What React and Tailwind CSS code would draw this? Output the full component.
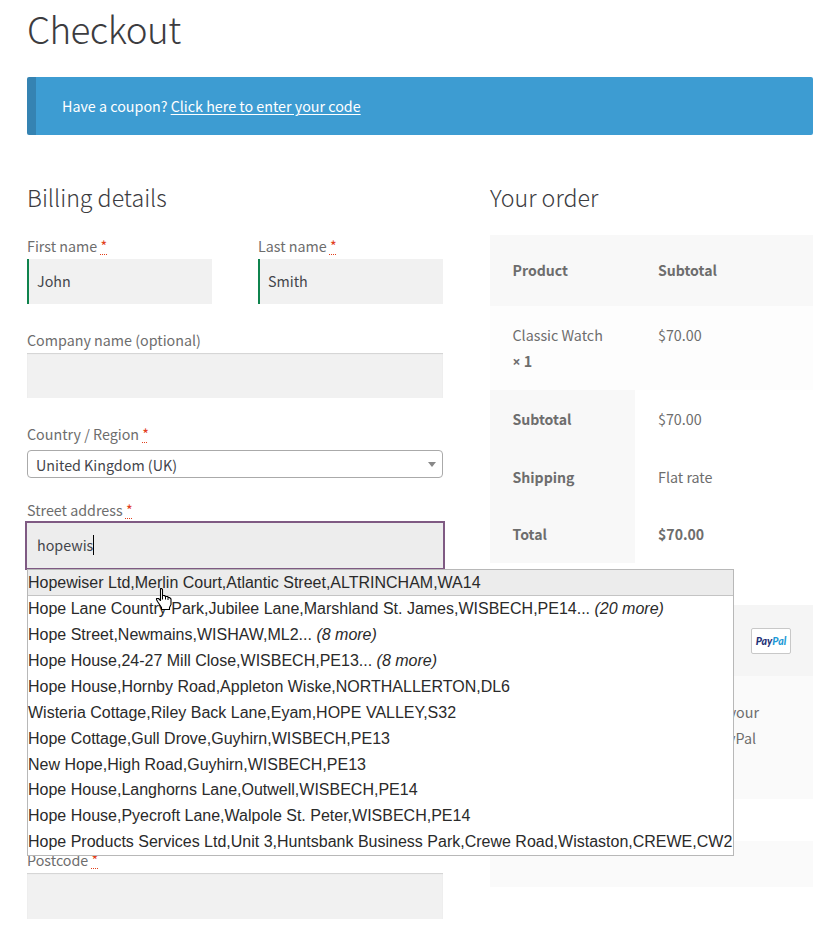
import React from "react";

const suggestions = [
  ["Hopewiser Ltd,Merlin Court,Atlantic Street,ALTRINCHAM,WA14"],
  ["Hope Lane Country Park,Jubilee Lane,Marshland St. James,WISBECH,PE14...", "(20 more)"],
  ["Hope Street,Newmains,WISHAW,ML2...", "(8 more)"],
  ["Hope House,24-27 Mill Close,WISBECH,PE13...", "(8 more)"],
  ["Hope House,Hornby Road,Appleton Wiske,NORTHALLERTON,DL6"],
  ["Wisteria Cottage,Riley Back Lane,Eyam,HOPE VALLEY,S32"],
  ["Hope Cottage,Gull Drove,Guyhirn,WISBECH,PE13"],
  ["New Hope,High Road,Guyhirn,WISBECH,PE13"],
  ["Hope House,Langhorns Lane,Outwell,WISBECH,PE14"],
  ["Hope House,Pyecroft Lane,Walpole St. Peter,WISBECH,PE14"],
  ["Hope Products Services Ltd,Unit 3,Huntsbank Business Park,Crewe Road,Wistaston,CREWE,CW2"],
];

function Label({ children, required }) {
  return (
    <label className="block h-[26px] whitespace-nowrap leading-[26px]">
      {children}
      {required && (
        <>
          {" "}
          <abbr className="text-[#e2401c] underline decoration-dotted decoration-1 underline-offset-2">*</abbr>
        </>
      )}
    </label>
  );
}

function NameField({ label, value }) {
  return (
    <div className="w-[185px]">
      <Label required>{label}</Label>
      <div className="h-[45px] border-l-2 border-[#0f834d] bg-[#f1f1f1] pl-2 leading-[43px] text-[#43454b]">{value}</div>
    </div>
  );
}

function EmptyField() {
  return <div className="h-[45px] bg-[#f1f1f1] shadow-[inset_0_1px_1px_rgba(0,0,0,0.125)]" />;
}

function HandCursor() {
  return (
    <svg className="absolute left-[126px] top-[17px]" width="19" height="24" viewBox="0 0 19 24">
      <path
        d="M6.500 1.500h1l1 1v6h2l1 1h2l1 1h1l1.500 1.500v5.500l-1.500 3v2h-8v-2l-4-6-1-2v-1h2l2 2v-11z"
        fill="#fff"
        stroke="#000"
        strokeWidth="1.100"
        strokeLinejoin="round"
      />
      <path d="M8.500 8v4.500M11.500 9.500v3M14 10.500v2.500" stroke="#000" strokeWidth="1" fill="none" />
    </svg>
  );
}

function Suggestions() {
  return (
    <ul className="absolute left-0 top-[46px] z-10 h-[287px] w-[707px] border border-[#b8b8b8] bg-white font-['Liberation_Sans',Arial,sans-serif] text-[16px] text-[#2a2a2a]">
      {suggestions.map(([text, more], i) => (
        <li
          key={i}
          className={
            i === 0
              ? "h-[26px] whitespace-nowrap border-b border-[#c4c4c4] bg-[#ececec] leading-[25px]"
              : "h-[25.935px] whitespace-nowrap leading-[25.85px]"
          }
        >
          {text}
          {more && <em> {more}</em>}
        </li>
      ))}
      <HandCursor />
    </ul>
  );
}

function TotalRow({ label, value, bold }) {
  return (
    <div className="flex h-[57.670px] leading-[58px]">
      <div className="w-[145px] bg-[#f8f8f8] pl-[22.500px] text-[14.100px] font-bold">{label}</div>
      <div className={bold ? "pl-[23px] text-[14.100px] font-bold" : "pl-[23px]"}>{value}</div>
    </div>
  );
}

export default function App() {
  return (
    <div className="h-[934px] w-[827px] overflow-hidden bg-white pl-[27px] pr-[14px] font-['Noto_Sans_CJK_SC',sans-serif] text-[14.300px] text-[#6d6d6d]">
      <h1 className="h-[77px] pt-[5px] text-[36.800px] font-light leading-[46px] tracking-[-0.550px] text-[#3c3c3f]">Checkout</h1>

      <div className="h-[58px] rounded-[2px] border-l-[9px] border-[#3583b2] bg-[#3d9cd2] pl-[26px] leading-[58px] text-white">
        Have a coupon?{" "}
        <a className="underline decoration-1 underline-offset-2">Click here to enter your code</a>
      </div>

      <div className="flex justify-between pt-[47px]">
        <section className="w-[416px]">
          <h3 className="h-[51px] text-[23.200px] font-light leading-[30px] text-[#3c3c3f]">Billing details</h3>
          <div className="flex justify-between">
            <NameField label="First name" value="John" />
            <NameField label="Last name" value="Smith" />
          </div>
          <div className="mt-[23px]">
            <Label>Company name (optional)</Label>
            <EmptyField />
          </div>
          <div className="mt-[23px]">
            <Label required>Country / Region</Label>
            <div className="mt-[3px] flex h-[28px] items-center justify-between rounded-[4px] border border-[#aaa] bg-white pl-2 pr-[6px] text-[#43454b]">
              <span className="pt-[2px]">United Kingdom (UK)</span>
              <svg width="8" height="5" viewBox="0 0 8 5"><path d="M0 0h8L4 5z" fill="#888" /></svg>
            </div>
          </div>
          <div className="mt-[19px]">
            <Label required>Street address</Label>
            <div className="relative h-[324px]">
              <div className="flex h-[45px] items-center bg-[#ededed] pb-[2px] pl-[10px] text-[#43454b] outline-2 outline-[#7f5a83]">
                <span>hopewis</span>
                <span className="h-[20px] w-px bg-black" />
              </div>
              <Suggestions />
            </div>
          </div>
          <Label required>Postcode</Label>
          <div className="h-[46px] bg-[#f1f1f1] shadow-[inset_0_1px_1px_rgba(0,0,0,0.125)]" />
        </section>

        <section className="w-[323px]">
          <h3 className="h-[53px] text-[23.200px] font-light leading-[30px] text-[#3c3c3f]">Your order</h3>
          <div className="flex h-[71px] bg-[#f8f8f8] text-[14.100px] font-bold leading-[71px]">
            <div className="w-[145px] pl-[22.500px]">Product</div>
            <div className="pl-[23px]">Subtotal</div>
          </div>
          <div className="flex h-[84px] bg-[#fdfdfd] pt-[16px] leading-[26px]">
            <div className="w-[145px] pl-[22.500px]">
              Classic Watch{" "}
              <strong className="block h-[26px]">
                <span className="font-['Open_Sans',sans-serif] text-[14px] leading-none">×</span> 1
              </strong>
            </div>
            <div className="pl-[23px]">$70.00</div>
          </div>
          <TotalRow label="Subtotal" value="$70.00" />
          <TotalRow label="Shipping" value="Flat rate" />
          <TotalRow label="Total" value="$70.00" bold />

          <div className="mt-[42px] flex h-[71px] items-center justify-end bg-[#f5f5f5] pr-[22px] pt-px">
            <div className="flex h-[26px] w-[40px] items-center justify-center rounded-[2px] border border-[#c8c8c8] bg-white pt-px font-['Lato',sans-serif] text-[10.500px] font-black italic leading-none">
              <span className="text-[#1f3277]">Pay</span>
              <span className="text-[#1f9bd7]">Pal</span>
            </div>
          </div>
          <div className="h-[123px] bg-[#fafafa] pr-[54px] pt-[23px] text-right leading-[26px]">
            <div>your</div>
            <div className="pr-[3px]">PayPal</div>
          </div>
          <div className="mt-[42px] h-[46px] bg-[#fafafa]" />
        </section>
      </div>
    </div>
  );
}
